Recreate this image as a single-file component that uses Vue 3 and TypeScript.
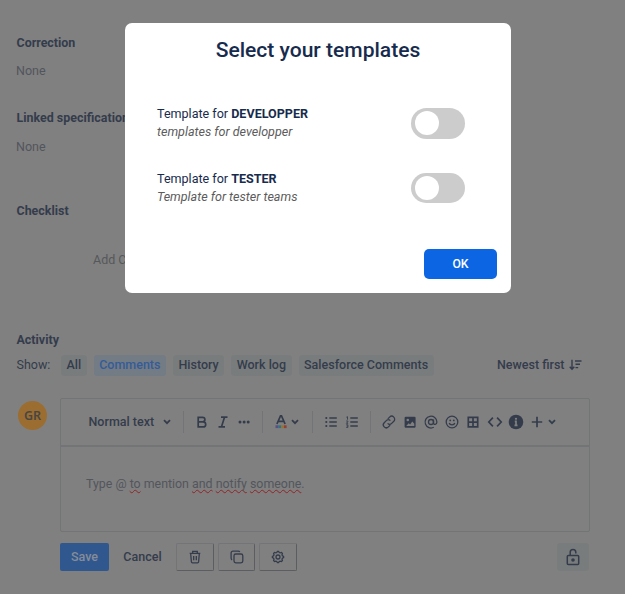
<script setup lang="ts">
import { ref } from 'vue'

interface Template {
  name: string
  description: string
}

const filters = ['All', 'Comments', 'History', 'Work log', 'Salesforce Comments']
const activeFilter = ref('Comments')
const templates: Template[] = [
  { name: 'DEVELOPPER', description: 'templates for developper' },
  { name: 'TESTER', description: 'Template for tester teams' },
]
const selected = ref<string[]>([])

function toggle(name: string) {
  selected.value = selected.value.includes(name)
    ? selected.value.filter((n) => n !== name)
    : [...selected.value, name]
}
</script>

<template>
  <main class="page">
    <section class="fields">
      <h2>Correction</h2>
      <p class="none first">None</p>
      <h2 class="linked">Linked specifications</h2>
      <p class="none second">None</p>
      <h2 class="check">Checklist</h2>
      <p class="add">Add Checklist</p>
      <h2 class="activity">Activity</h2>
    </section>

    <div class="filters">
      <span class="show">Show:</span>
      <button
        v-for="f in filters"
        :key="f"
        class="chip"
        :class="{ active: f === activeFilter }"
        @click="activeFilter = f"
      >{{ f }}</button>
      <span class="sort">Newest first
        <svg width="13" height="12" viewBox="0 0 13 12"><path d="M3 .8v9M.7 7.8 3 10.3l2.3-2.5M6 2h6.5M6.5 5.3H11M6.5 8.6h2.7" /></svg>
      </span>
    </div>

    <div class="comment">
      <div class="avatar">GR</div>
      <div class="editor">
        <div class="toolbar">
          <span class="style">Normal text</span>
          <svg class="chev a" width="8" height="6" viewBox="0 0 8 6"><path d="M1 1.2 4 4.2 7 1.2" /></svg>
          <i class="sep s1"></i>
          <svg class="ic bold" viewBox="0 0 16 16"><path d="M4.2 3.3h4.4a2.3 2.3 0 0 1 0 4.6H4.2zM4.2 7.9h5a2.5 2.5 0 0 1 0 5h-5z" /></svg>
          <svg class="ic italic" viewBox="0 0 16 16"><path d="M6 3.2h6.5M3.5 12.8H10M9.5 3.2l-3 9.6" /></svg>
          <svg class="ic more" viewBox="0 0 16 16"><g class="solid"><circle cx="4" cy="8" r="1.5" /><circle cx="8.1" cy="8" r="1.5" /><circle cx="12.2" cy="8" r="1.5" /></g></svg>
          <i class="sep s2"></i>
          <svg class="ic color" viewBox="0 0 16 16"><path d="M3.9 10 7.5 1.9h1L12.1 10M5.2 7.4h5.6" /><path class="purple" d="M2.5 12.7h3" /><path class="teal" d="M5.5 12.7h2.5" /><path class="amber" d="M8 12.7h3" /><path class="red" d="M11 12.7h2.6" /></svg>
          <svg class="chev b" width="8" height="6" viewBox="0 0 8 6"><path d="M1 1.2 4 4.2 7 1.2" /></svg>
          <i class="sep s3"></i>
          <svg class="ic bullets" viewBox="0 0 16 16"><path d="M6.3 4h7.5M6.3 8h7.5M6.3 12h7.5" /><g class="solid"><circle cx="3.3" cy="4" r="1.1" /><circle cx="3.3" cy="8" r="1.1" /><circle cx="3.3" cy="12" r="1.1" /></g></svg>
          <svg class="ic numbers" viewBox="0 0 16 16"><path d="M6.3 4h7.5M6.3 8h7.5M6.3 12h7.5" /><path class="fine" d="M2.4 3.2 3.5 2.7v3M2.2 7h1.6v.8L2.4 9.3h1.7M2.2 10.8h1.7v2.6H2.2M2.7 12.1h1" /></svg>
          <i class="sep s4"></i>
          <svg class="ic link" viewBox="0 0 16 16"><path class="mid" d="m6.8 4.9 1.8-1.8a2.9 2.9 0 0 1 4.2 4.2l-2.1 2.1a2.9 2.9 0 0 1-4.1 0M9.2 11.1l-1.8 1.8a2.9 2.9 0 0 1-4.2-4.2l2.1-2.1a2.9 2.9 0 0 1 4.1 0" /></svg>
          <svg class="ic image" viewBox="0 0 16 16"><rect class="solid" x="2.6" y="2.7" width="11" height="11" rx="1.2" /><circle class="hole" cx="5.8" cy="6" r="1.3" /><path class="hole" d="m4.2 12 2.5-2.8 1.4 1.3 2.2-3.1 2 2.4V12z" /></svg>
          <svg class="ic at" viewBox="0 0 16 16"><circle class="mid" cx="8" cy="8" r="2.5" /><path class="mid" d="M10.5 5.4v3.7c0 1.9 3.4 1.6 3.4-1.2A5.9 5.9 0 1 0 10.8 13.3" /></svg>
          <svg class="ic smile" viewBox="0 0 16 16"><circle class="mid" cx="8" cy="8" r="5.8" /><path class="mid" d="M5.2 9c.7 2.6 4.9 2.6 5.6 0" /><g class="solid"><circle cx="6.2" cy="6.4" r=".9" /><circle cx="9.8" cy="6.4" r=".9" /></g></svg>
          <svg class="ic table" viewBox="0 0 16 16"><path d="M3.3 3.4h9.4v9.4H3.3zM8 3.4v9.4M3.3 8.1h9.4" /></svg>
          <svg class="ic code" viewBox="0 0 16 16"><path d="M5.9 3.7 1.8 8l4.1 4.3M10.1 3.7 14.2 8l-4.1 4.3" /></svg>
          <svg class="ic info" viewBox="0 0 16 16"><circle class="solid" cx="8" cy="8" r="7.3" /><circle class="hole" cx="8" cy="4.8" r="1.1" /><path class="cut" d="M6.8 7.4H8v3.9M6.5 11.4h3" /></svg>
          <svg class="ic plus" viewBox="0 0 16 16"><path d="M8 2.8v10.4M2.8 8h10.4" /></svg>
          <svg class="chev c" width="8" height="6" viewBox="0 0 8 6"><path d="M1 1.2 4 4.2 7 1.2" /></svg>
        </div>
        <div class="body">Type @ <u>to</u> mention <u>and</u> <u>notify</u> <u>someone</u>.</div>
      </div>
    </div>

    <div class="actions">
      <button class="save">Save</button>
      <button class="cancel">Cancel</button>
      <button class="tool t1">
        <svg class="ic" viewBox="0 0 16 16"><path class="mid" d="M2.7 4.3h10.6M5.7 4V2.3h4.6V4M3.7 4.7l.7 8.2c.1.6.4.9 1 .9h5.2c.6 0 .9-.3 1-.9l.7-8.2M6.7 7v4.3M9.3 7v4.3" /></svg>
      </button>
      <button class="tool t2">
        <svg class="ic" viewBox="0 0 16 16"><rect class="mid" x="5" y="5" width="8.8" height="8.8" rx="1.8" /><path class="mid" d="M3.1 10.8c-.7-.3-1-.9-1-1.6V4c0-1.1.8-1.9 1.9-1.9h5.2c.7 0 1.3.3 1.6 1" /></svg>
      </button>
      <button class="tool t3">
        <svg class="ic" viewBox="0 0 16 16"><path class="mid" d="m6.8 3.5.6-1.2h1.2l.6 1.2 1 .4 1.3-.4.9.9-.4 1.3.4 1 1.2.7v1.2l-1.2.7-.4 1 .4 1.3-.9.9-1.3-.4-1 .4-.6 1.2H7.4l-.6-1.2-1-.4-1.3.4-.9-.9.4-1.3-.4-1-1.2-.7V7.4l1.2-.7.4-1-.4-1.3.9-.9 1.3.4z" /><circle class="mid" cx="8" cy="8" r="2" /></svg>
      </button>
      <button class="lock">
        <svg width="14" height="18" viewBox="0 0 14 18"><rect x="1.3" y="7.4" width="11.4" height="9.2" rx="1" /><path d="M4.2 7.3V4.2a2.8 2.8 0 0 1 5.6 0v1.2" /><circle class="solid" cx="7" cy="12" r="1.8" /></svg>
      </button>
    </div>
  </main>

  <div class="backdrop">
    <div class="modal" role="dialog">
      <h1>Select your templates</h1>
      <div v-for="t in templates" :key="t.name" class="row">
        <div class="label">
          <div>Template for <b>{{ t.name }}</b></div>
          <em>{{ t.description }}</em>
        </div>
        <button class="switch" :class="{ on: selected.includes(t.name) }" @click="toggle(t.name)"><span></span></button>
      </div>
      <div class="foot"><button class="ok">OK</button></div>
    </div>
  </div>
</template>

<style>
body { margin: 0; background: #808080; overflow: hidden; }
</style>

<style scoped>
* { box-sizing: border-box; }
h1, h2, p { margin: 0; }
button { border: 0; padding: 0; font: inherit; color: inherit; background: none; }
svg { display: block; flex: none; fill: none; stroke: #343c4c; stroke-width: 1.7; }
.page {
  height: 594px; background: #808080; color: #343c4c; overflow: hidden;
  font: 12.5px/16px Roboto, sans-serif;
}
.fields { padding: 35px 0 0 16px; }
h2 { padding-left: .5px; font-size: 12.45px; line-height: 16px; font-weight: 700; }
.none { color: #52555d; }
.first { margin-top: 12px; }
.linked { margin-top: 31px; }
.second { margin-top: 13px; }
.check { margin-top: 48px; }
.add { margin: 33px 0 0 77px; color: #55585a; }
.activity { margin-top: 64px; }
.filters { display: flex; align-items: center; margin-top: 7px; padding-left: 16.5px; height: 21px; }
.show { width: 44.5px; margin-top: -1px; }
.chip { height: 21px; margin-right: 7px; padding: 0 5.5px 1px; border-radius: 3px; background: #797c7d; font-weight: 500; white-space: nowrap; }
.chip.active { background: #737b84; color: #355b98; }
.sort { display: flex; align-items: center; gap: 4px; margin-left: auto; margin-right: 43.5px; margin-top: -1px; font-weight: 500; }
.sort svg { stroke-width: 1.4; }
.comment { display: flex; margin-top: 22px; }
.avatar {
  width: 29px; height: 29px; margin: 3px 13px 0 18px; border-radius: 50%;
  background: #9b6d31; color: #484644; font: 600 12.5px/29px "Noto Sans", sans-serif; text-align: center;
}
.editor { width: 530px; height: 134px; border: 1px solid #737475; border-radius: 2px; }
.toolbar { display: flex; align-items: center; height: 48px; border-bottom: 2px solid #737475; padding-left: 27.5px; }
.style { width: 74px; font-weight: 500; }
.ic { width: 16px; height: 16px; }
.chev { stroke-width: 1.8; }
.sep { width: 1px; height: 22px; background: #727477; }
.s1 { margin: 0 10px 0 12.5px; }
.italic, .more { margin-left: 5px; }
.s2 { margin: 0 10px 0 10px; }
.color { margin-right: -1px; }
.b { margin-left: 3px; }
.s3 { margin: 0 10px 0 13px; }
.numbers { margin-left: 5px; }
.s4 { margin: 0 10px 0 10px; }
.image, .at, .smile, .table, .info, .plus { margin-left: 5px; }
.code { margin-left: 6px; }
.c { margin-left: 3px; }
.solid { fill: #343c4c; stroke: none; }
.hole { fill: #808080; stroke: none; }
.cut { stroke: #808080; stroke-width: 1.7; }
.mid { stroke-width: 1.3; }
.fine { stroke-width: .9; }
.purple { stroke: #5b4f83; stroke-width: 2.8; }
.teal { stroke: #26778c; stroke-width: 2.8; }
.amber { stroke: #987233; stroke-width: 2.8; }
.red { stroke: #914032; stroke-width: 2.8; }
.body { padding: 29px 25px 0; color: #53565d; font-size: 12.4px; }
.body u { text-decoration: underline wavy #902326 1.2px; text-underline-offset: 1px; text-decoration-skip-ink: none; }
.actions { display: flex; margin-top: 11px; padding-left: 60px; height: 28px; font-weight: 500; }
.save { width: 49px; border-radius: 2px; background: #31578f; color: #858c98; }
.cancel { width: 67px; }
.tool { display: flex; align-items: center; justify-content: center; height: 28px; border: 1px solid #747476; border-right-color: #5c5d60; border-bottom-color: #5c5d60; border-radius: 2px; }
.t1 { width: 38px; }
.t2 { width: 37px; margin: 0 4px; }
.t3 { width: 38px; }
.lock { display: flex; align-items: center; justify-content: center; width: 32px; margin-left: 260px; padding-bottom: 1px; background: #797c7d; border-radius: 3px; }
.lock svg { stroke-width: 1.5; }
.backdrop { position: absolute; inset: 0; display: flex; align-items: flex-start; padding: 23px 0 0 125px; }
.modal { width: 386px; height: 270px; padding: 14px 14px 0 32px; background: #fff; border-radius: 7px; color: #172b4d; font: 12.55px/18px Roboto, sans-serif; }
h1 { height: 69px; margin-left: -18px; font-size: 21.05px; line-height: 25px; font-weight: 500; text-align: center; }
.row { display: flex; justify-content: space-between; height: 64.5px; padding-right: 32px; }
.label { margin-top: -1px; }
.row + .row .label { margin-top: -.5px; }
b { font-weight: 700; }
em { color: #5c5c5c; }
.switch { display: flex; align-items: center; width: 54px; height: 30.5px; margin-top: 2px; padding-left: 3.5px; border-radius: 16px; background: #ccc; }
.switch span { width: 24px; height: 24px; border-radius: 50%; background: #fff; }
.switch.on { padding-left: 26px; background: #0c66e4; }
.foot { display: flex; justify-content: flex-end; margin-top: 14px; }
.ok { width: 73px; height: 30px; border-radius: 5px; background: #0c66e4; color: #fff; font-size: 12.2px; font-weight: 500; }
</style>
